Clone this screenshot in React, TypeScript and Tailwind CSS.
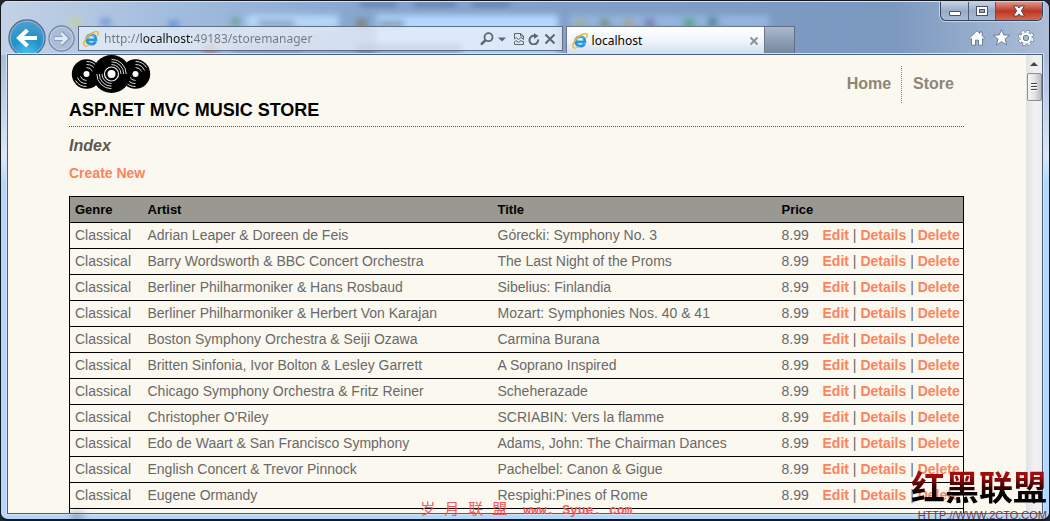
type Album = {
  artist: string;
  title: string;
};

const albums: Album[] = [
  { artist: "Adrian Leaper & Doreen de Feis", title: "Górecki: Symphony No. 3" },
  { artist: "Barry Wordsworth & BBC Concert Orchestra", title: "The Last Night of the Proms" },
  { artist: "Berliner Philharmoniker & Hans Rosbaud", title: "Sibelius: Finlandia" },
  { artist: "Berliner Philharmoniker & Herbert Von Karajan", title: "Mozart: Symphonies Nos. 40 & 41" },
  { artist: "Boston Symphony Orchestra & Seiji Ozawa", title: "Carmina Burana" },
  { artist: "Britten Sinfonia, Ivor Bolton & Lesley Garrett", title: "A Soprano Inspired" },
  { artist: "Chicago Symphony Orchestra & Fritz Reiner", title: "Scheherazade" },
  { artist: "Christopher O'Riley", title: "SCRIABIN: Vers la flamme" },
  { artist: "Edo de Waart & San Francisco Symphony", title: "Adams, John: The Chairman Dances" },
  { artist: "English Concert & Trevor Pinnock", title: "Pachelbel: Canon & Gigue" },
  { artist: "Eugene Ormandy", title: "Respighi:Pines of Rome" },
];

const GlassBackdrop = () => (
  <svg className="absolute inset-x-0 top-0 h-[54px] w-full" viewBox="0 0 1050 54" preserveAspectRatio="none" aria-hidden="true">
    <defs>
      <filter id="soft" x="-50%" y="-50%" width="200%" height="200%">
        <feGaussianBlur stdDeviation="3" />
      </filter>
      <linearGradient id="sky" x1="0" x2="1" y1="0" y2="0">
        <stop offset="0" stopColor="#c3d2e6" />
        <stop offset="0.15" stopColor="#a4bedf" />
        <stop offset="0.35" stopColor="#86a5cf" />
        <stop offset="0.7" stopColor="#7d9bc3" />
        <stop offset="0.85" stopColor="#7b98bf" />
        <stop offset="1" stopColor="#adbfd8" />
      </linearGradient>
    </defs>
    <rect width="1050" height="54" fill="url(#sky)" />
    <g filter="url(#soft)">
      <rect x="246" y="14" width="92" height="14" fill="#b6d6f8" />
      <rect x="376" y="14" width="182" height="40" fill="#b3d8ff" />
      <rect x="570" y="14" width="200" height="13" fill="#94b4de" />
      <rect x="360" y="1" width="36" height="4" fill="#58719b" />
      <rect x="414" y="1" width="42" height="4" fill="#58719b" />
      <rect x="472" y="1" width="38" height="4" fill="#58719b" />
      <rect x="258" y="20" width="36" height="5" fill="#7891b2" />
      <rect x="378" y="20" width="26" height="6" fill="#7891a5" />
      <rect x="356" y="43" width="106" height="7" fill="#53687c" />
      <rect x="203" y="43" width="14" height="9" fill="#a5705f" />
      <rect x="232" y="44" width="70" height="6" fill="#6d87ad" />
      <rect x="68" y="16" width="12" height="10" fill="#c3cfae" />
      <rect x="100" y="17" width="10" height="8" fill="#749ad4" />
      <rect x="168" y="20" width="10" height="8" fill="#5f92da" />
      <rect x="231" y="17" width="8" height="8" fill="#68a494" />
      <rect x="356" y="18" width="10" height="9" fill="#7b8374" />
      <rect x="576" y="18" width="10" height="8" fill="#9eae94" />
      <rect x="600" y="18" width="10" height="8" fill="#78916e" />
      <rect x="624" y="18" width="10" height="8" fill="#a3a687" />
      <rect x="645" y="18" width="10" height="8" fill="#7576ac" />
      <rect x="684" y="18" width="11" height="8" fill="#4aa276" />
      <rect x="708" y="16" width="10" height="10" fill="#528a9a" />
    </g>
  </svg>
);

const BrowserLogo = () => (
  <svg className="size-4 shrink-0" viewBox="0 0 16 16" aria-hidden="true">
    <path
      d="M12.6 10.6c-.8 1.7-2.3 2.6-4.2 2.6-2.8 0-4.8-2-4.8-4.7 0-2.8 2-4.8 4.8-4.8 2.9 0 4.7 2.1 4.5 5.2H4.4"
      fill="none"
      stroke="#2b95d8"
      strokeWidth="2.8"
    />
    <path d="M3.6 8.2c.2-2.600 2-4.500 4.800-4.500 1.500 0 2.700.6 3.500 1.500" fill="none" stroke="#7fcdf4" strokeWidth="1" />
    <path
      d="M2.2 14.9C-.6 13.6 1.2 8.600 5.300 4.700 9.200 1 13.800-.3 14.900 1.400c.6 1 .2 2.300-.5 3.600"
      fill="none"
      stroke="#f5b81f"
      strokeWidth="1.5"
    />
    <path d="M2.2 14.9c1.200.4 2.800-.2 4.200-1.200" fill="none" stroke="#f5b81f" strokeWidth="1.3" />
  </svg>
);

const WindowButtons = () => (
  <div className="flex h-[19px] rounded-b-md border border-t-0 border-[#34435c] shadow-[0_0_0_1px_#c5d3e6]">
    <button aria-label="Minimize" className="flex w-7 items-center justify-center rounded-bl-md border-r border-[#4c5c77] bg-linear-to-b from-[#c5d2e2] via-[#98abc6] to-[#a9bcd6]">
      <svg className="h-3 w-3.5" viewBox="0 0 14 12">
        <rect x="1.500" y="6.500" width="11" height="4" rx="0.500" fill="#fff" stroke="#4a5365" />
      </svg>
    </button>
    <button aria-label="Maximize" className="flex w-[27px] items-center justify-center border-r border-[#4c5c77] bg-linear-to-b from-[#c5d2e2] via-[#98abc6] to-[#a9bcd6]">
      <svg className="h-3 w-3.5" viewBox="0 0 14 12">
        <rect x="1.500" y="1.500" width="11" height="9" fill="#fff" stroke="#4a5365" />
        <rect x="4.500" y="4.500" width="5" height="3" fill="#95a9c4" stroke="#4a5365" />
      </svg>
    </button>
    <button aria-label="Close" className="flex w-[46px] items-center justify-center rounded-br-md bg-linear-to-b from-[#d9968b] via-[#bd3420] to-[#d0684f]">
      <svg className="h-3 w-3.5" viewBox="0 0 14 12">
        <path d="M1.500 1h4L7 3l1.500-2h4L9.300 5.800 12.700 11H8.600L7 8.900 5.400 11H1.300l3.400-5.200z" fill="#fff" stroke="#53424e" />
      </svg>
    </button>
  </div>
);

const ChromeIcons = () => (
  <div className="mr-[9px] flex justify-end gap-2">
    <button aria-label="Home">
      <svg className="size-4" viewBox="0 0 16 16" fill="#fff" stroke="#53698c" strokeWidth="0.8">
        <path d="M8 .7.500 8l1.200 1.200.8-.6v6.600h4v-5h3v5h4V8.600l.8.6L15.500 8l-2.300-2.300V1.800h-2.200v1.800z" />
      </svg>
    </button>
    <button aria-label="Favorites">
      <svg className="size-[17px]" viewBox="0 0 17 17" fill="#fff" stroke="#53698c" strokeWidth="0.8">
        <path d="m8.500.5 2.200 5.400 5.900.3-4.500 3.700 1.500 6-5.100-3.200-5.100 3.200 1.500-6L.4 6.200l5.900-.3z" />
      </svg>
    </button>
    <button aria-label="Tools">
      <svg className="size-4" viewBox="0 0 16 16" fill="none">
        <circle cx="8" cy="8" r="6.600" stroke="#53698c" strokeWidth="3" strokeDasharray="3.200 1.980" />
        <circle cx="8" cy="8" r="4.300" stroke="#53698c" strokeWidth="4" />
        <circle cx="8" cy="8" r="6.600" stroke="#fff" strokeWidth="2" strokeDasharray="2.600 2.580" strokeDashoffset="-0.300" />
        <circle cx="8" cy="8" r="4.400" stroke="#fff" strokeWidth="2.800" />
      </svg>
    </button>
  </div>
);

const BrowserChrome = () => (
  <header className="relative flex h-[52px] shrink-0 justify-between">
    <div className="flex min-w-0 flex-1 items-start pt-6 pl-[7px]">
      <div className="-mt-[7px] flex h-[35px] shrink-0 items-start overflow-hidden">
        <button aria-label="Back">
          <svg className="size-[38px]" viewBox="0 0 38 38">
            <defs>
              <radialGradient id="back" cx="0.500" cy="0.950" r="0.900">
                <stop offset="0" stopColor="#4cc5ee" />
                <stop offset="0.500" stopColor="#2290c9" />
                <stop offset="1" stopColor="#4f9fce" />
              </radialGradient>
            </defs>
            <circle cx="19" cy="19" r="18" fill="url(#back)" stroke="#5c6e89" strokeWidth="1.500" />
            <circle cx="19" cy="19" r="16.800" fill="none" stroke="#8fcbe8" strokeWidth="0.800" />
            <path d="M29 19H12m7.500-8L11 19l8.500 8" fill="none" stroke="#fff" strokeWidth="4" />
          </svg>
        </button>
        <button aria-label="Forward" className="mt-1.5 ml-0.5">
          <svg className="size-[27px]" viewBox="0 0 27 27">
            <circle cx="13.500" cy="13.500" r="12.500" fill="#a9bdd8" stroke="#74859f" strokeWidth="1.300" />
            <circle cx="13.500" cy="13.500" r="11.300" fill="none" stroke="#c4d2e5" />
            <path d="M6 13.500h12m-5-6 6 6-6 6" fill="none" stroke="#8394ae" strokeWidth="4.500" />
            <path d="M6.500 13.500H18m-5-5.500 5.500 5.500-5.500 5.500" fill="none" stroke="#e0e8f2" strokeWidth="2.800" />
          </svg>
        </button>
      </div>
      <form className="ml-[3px] flex h-[25px] min-w-0 flex-[472] items-center border border-[#5f6e84] bg-[#e6eef7]/80 pr-1.5 pl-1">
        <label htmlFor="address" aria-label="Address">
          <BrowserLogo />
        </label>
        {/* the host part of the address is darker than the rest */}
        <input
          id="address"
          type="text"
          defaultValue="http://localhost:49183/storemanager"
          className="ml-[5px] h-5 min-w-0 flex-1 bg-[linear-gradient(90deg,#72777e_37px,#111_37px,#111_88px,#72777e_88px)] bg-clip-text font-['Noto_Sans',sans-serif] text-xs leading-5 text-transparent caret-black outline-none"
        />
        <div className="flex items-center gap-1 text-[#5e6570]">
          <button type="button" aria-label="Search">
            <svg className="size-3.5" viewBox="0 0 14 14" fill="none" stroke="currentColor">
              <circle cx="8.500" cy="5.200" r="4" strokeWidth="1.800" />
              <path d="m5.500 8.200-4.500 4.500" strokeWidth="2.500" />
            </svg>
          </button>
          <button type="button" aria-label="Show address history" className="mr-1">
            <svg className="h-3 w-2" viewBox="0 0 8 12" fill="currentColor">
              <path d="M0 4.500h8L4 8.500z" />
            </svg>
          </button>
          <button type="button" aria-label="Compatibility view">
            <svg className="h-3 w-2.5" viewBox="0 0 10 12" fill="none" stroke="currentColor">
              <path d="M.5 6V.5h6l3 2.500v3M6.500.5V3h3M.5 8.500v3h9v-3" />
              <path d="M0 6.500 2 4.500l2.500 2L7 4.500l3 2M0 9.500l2-2 2.500 2 2.500-2 3 2" />
            </svg>
          </button>
          <button type="button" aria-label="Refresh">
            <svg className="size-3" viewBox="0 0 12 12">
              <path d="M10 6.500A4.300 4.300 0 1 1 6.500 2.900" fill="none" stroke="currentColor" strokeWidth="2" />
              <path d="M6 0v6l4.500-3z" fill="currentColor" />
            </svg>
          </button>
          <button type="button" aria-label="Stop">
            <svg className="size-3" viewBox="0 0 12 12" stroke="currentColor" strokeWidth="2">
              <path d="m1.500 1.500 9 9m0-9-9 9" />
            </svg>
          </button>
        </div>
      </form>
      <div className="ml-[3px] flex h-7 min-w-0 flex-[187] items-center border border-b-0 border-[#69788e] bg-linear-to-b from-white via-[#f0f5fb] to-[#cfdeee] px-[5px]">
        <BrowserLogo />
        <span className="ml-1 flex-1 font-['Noto_Sans',sans-serif] text-xs leading-5 text-black">localhost</span>
        <button aria-label="Close tab" className="text-[#8e949c]">
          <svg className="size-2.5" viewBox="0 0 10 10" stroke="currentColor" strokeWidth="2">
            <path d="m1.500 1.500 7 7m0-7-7 7" />
          </svg>
        </button>
      </div>
      <button aria-label="New tab" className="h-7 w-[30px] border border-b-0 border-l-0 border-[#5f6e84] bg-linear-to-b from-[#aabacf] to-[#74869d]" />
      <div className="flex-[145]" />
    </div>
    <div className="flex shrink-0 flex-col gap-2 pr-1.5">
      <WindowButtons />
      <ChromeIcons />
    </div>
  </header>
);

const Vinyls = () => (
  <svg className="h-[38px] w-[82px]" viewBox="0 0 82 38" aria-hidden="true">
    <g fill="none" stroke="#eee" strokeWidth="0.900">
      <circle cx="17.500" cy="19" r="14.700" fill="#000" stroke="none" />
      <path d="M17.500 12.500a6.500 6.500 0 0 1 6 4M17.500 9.500a9.500 9.500 0 0 1 9 6M17.500 6.500a12.500 12.500 0 0 1 11 6M17.500 25.500a6.500 6.500 0 0 1-6-4M17.500 28.500a9.500 9.500 0 0 1-9-6M17.500 31.500a12.500 12.500 0 0 1-11-6" />
      <circle cx="17.500" cy="19" r="3" fill="#fff" stroke="none" />
      <circle cx="66.500" cy="19" r="14.700" fill="#000" stroke="none" />
      <path d="M66.500 12.500a6.500 6.500 0 0 1 6 4M66.500 9.500a9.500 9.500 0 0 1 9 6M66.500 6.500a12.500 12.500 0 0 1 11 6M66.500 25.500a6.500 6.500 0 0 1-6-4M66.500 28.500a9.500 9.500 0 0 1-9-6M66.500 31.500a12.500 12.500 0 0 1-11-6" />
      <circle cx="66.500" cy="19" r="3" fill="#fff" stroke="none" />
      <circle cx="42.500" cy="19" r="19" fill="#000" stroke="none" />
      <circle cx="42.500" cy="19" r="7" strokeWidth="1.200" />
      <path d="M42.500 9.500a9.500 9.500 0 0 1 9.500 9.500M42.500 6.800A12.200 12.200 0 0 1 54.700 19M42.500 4.300A14.700 14.700 0 0 1 57.200 19M42.500 28.500a9.500 9.500 0 0 1-9.500-9.500M42.500 31.200A12.200 12.200 0 0 1 30.300 19M42.500 33.700A14.700 14.700 0 0 1 27.800 19" />
      <circle cx="42.500" cy="19" r="4" fill="#fff" stroke="none" />
    </g>
  </svg>
);

const AlbumTable = () => (
  <table className="mt-[13px] w-full table-fixed border-collapse border border-black text-left text-sm leading-5 whitespace-nowrap text-[#696969]">
    <colgroup>
      <col className="w-[73px]" />
      <col />
      <col className="w-[284px]" />
      <col className="w-[41px]" />
      <col className="w-[146px]" />
    </colgroup>
    <thead className="bg-[#999891] text-[13px] text-black">
      <tr className="h-[26px] border-b border-black">
        <th className="px-[5px] py-0">Genre</th>
        <th className="px-[5px] py-0">Artist</th>
        <th className="px-[5px] py-0">Title</th>
        <th className="px-[5px] py-0">Price</th>
        <th className="px-[5px] py-0"></th>
      </tr>
    </thead>
    <tbody>
      {albums.map((album) => (
        <tr key={album.title} className="h-[26px] border-b border-black">
          <td className="px-[5px] pt-0 pb-0.5">Classical</td>
          <td className="px-[5px] pt-0 pb-0.5">{album.artist}</td>
          <td className="px-[5px] pt-0 pb-0.5">{album.title}</td>
          <td className="px-[5px] pt-0 pb-0.5">8.99</td>
          <td className="px-[5px] pt-0 pb-0.5">
            <a href="#edit" className="font-bold text-[#fa8460]">Edit</a> |{" "}
            <a href="#details" className="font-bold text-[#fa8460]">Details</a> |{" "}
            <a href="#delete" className="font-bold text-[#fa8460]">Delete</a>
          </td>
        </tr>
      ))}
      <tr className="h-[26px]">
        <td colSpan={5}></td>
      </tr>
    </tbody>
  </table>
);

const StorePage = () => (
  <main className="min-w-0 flex-1 overflow-hidden bg-[#fbf8ef] pr-[62px] pl-[61px] font-['Liberation_Sans',Arial,sans-serif]">
    <div className="flex h-[72px] justify-between border-b border-dotted border-[#55534b]">
      <div>
        <Vinyls />
        <h1 className="mt-[5px] text-lg leading-6 font-bold whitespace-nowrap text-black">ASP.NET MVC MUSIC STORE</h1>
      </div>
      <nav className="mt-[11px] flex h-[37px] text-base leading-[35px] font-bold text-[#8c8675]">
        <a href="#home" className="pr-2.5">Home</a>
        <span className="h-full border-l border-dotted border-[#8c8675]" />
        <a href="#store" className="pr-2.5 pl-[11px]">Store</a>
      </nav>
    </div>
    <h2 className="mt-[9px] text-base leading-5 font-bold text-[#5c5850] italic">Index</h2>
    <p className="mt-[7px] text-sm leading-5 font-bold text-[#fa8460]">
      <a href="#create">Create New</a>
    </p>
    <AlbumTable />
  </main>
);

const Scrollbar = () => (
  <div className="flex w-4 shrink-0 flex-col items-center bg-linear-to-r from-[#e3e3e3] via-[#f0f0f0] to-[#eee] pb-2">
    <svg className="mt-1.5 h-1.5 w-2" viewBox="0 0 8 6" aria-hidden="true">
      <path d="M0 5h8L4 1z" fill="#444" />
    </svg>
    <div className="mt-1.5 flex h-7 w-[15px] flex-col items-center justify-center gap-px rounded-xs border border-[#8d8d8d] bg-linear-to-r from-[#f7f7f7] via-[#e3e3e3] to-[#b9bbc0]">
      <span className="h-0.5 w-1.5 border-t border-[#444] bg-white" />
      <span className="h-0.5 w-1.5 border-t border-[#444] bg-white" />
      <span className="h-0.5 w-1.5 border-t border-[#444] bg-white" />
    </div>
    <svg className="mt-auto h-1.5 w-2" viewBox="0 0 8 6" aria-hidden="true">
      <path d="M0 1h8L4 5z" fill="#444" />
    </svg>
  </div>
);

const App = () => {
  return (
    <div className="bg-[#23252c]">
      <div className="relative flex h-screen flex-col overflow-hidden rounded-lg border-x border-t border-b-2 border-[#15181f] bg-linear-to-b from-[#a9bcd6] from-10% via-[#dce8f8] via-30% to-[#b4d8fc] to-35%">
        <GlassBackdrop />
        <div className="relative h-px shrink-0 bg-[#d8e3f0]" />
        <BrowserChrome />
        <div className="relative mr-1.5 ml-1.5 flex min-h-0 flex-1 border border-[#4c607c] shadow-[0_0_0_1px_#d4e2f4]">
          <StorePage />
          <Scrollbar />
        </div>
        <div className="relative h-[5px] shrink-0">
          <span className="absolute top-0 left-[70px] h-full w-3 bg-[#587b9e] blur-xs" />
        </div>

        <div className="absolute bottom-0 left-[40%] flex items-center gap-4 font-['Liberation_Mono','Noto_Sans_CJK_SC',monospace] leading-4 whitespace-nowrap text-[#f15b5b]">
          <span className="text-[15px]">岁 月 联 盟</span>
          <span className="text-[13px] font-bold">www. Syue. com</span>
        </div>
        <div className="absolute right-0.5 -bottom-0.5 flex flex-col items-end whitespace-nowrap">
          <span className="bg-linear-to-b from-[#a00d0d] from-30% to-black to-75% bg-clip-text font-['Noto_Sans_CJK_SC',sans-serif] text-[34px] leading-[46px] font-bold text-transparent">
            红黑联盟
          </span>
          <span className="font-['Liberation_Sans',Arial,sans-serif] text-[11px] leading-3 text-[#713c44]">
            HTTP://WWW.2CTO.COM
          </span>
        </div>
      </div>
    </div>
  );
};

export default App;
